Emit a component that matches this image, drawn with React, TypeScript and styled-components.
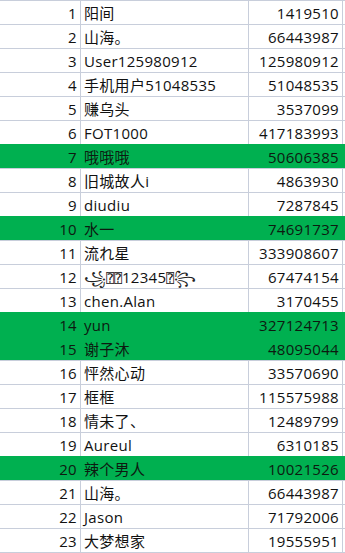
import React from "react";
import styled, { createGlobalStyle } from "styled-components";

const GlobalStyle = createGlobalStyle`
  html, body { margin: 0; padding: 0; background: #ffffff; }
  body { font-family: "Open Sans", "Noto Sans CJK SC", sans-serif; }
`;

const GRID = "#c8cedb";
const GREEN = "#00b050";

type RowData = { n: number; name: React.ReactNode; score: string; hl?: boolean };

const Sheet = styled.div`
  width: 345px;
  border-bottom: 1px solid ${GRID};
  display: flex;
  flex-direction: column;
`;

const Row = styled.div<{ $hl?: boolean }>`
  display: grid;
  grid-template-columns: 81px 168px 94px 1fr;
  height: 24px;
  box-sizing: border-box;
  border-top: 1px solid ${(p) => (p.$hl ? GREEN : GRID)};
  background: ${(p) => (p.$hl ? GREEN : "#ffffff")};
`;

const Cell = styled.div<{ $hl?: boolean; $align?: "left" | "right"; $last?: boolean }>`
  box-sizing: border-box;
  height: 23px;
  border-right: ${(p) => (p.$last ? "none" : `1px solid ${p.$hl ? GREEN : GRID}`)};
  font-size: 15px;
  letter-spacing: 0.3px;
  line-height: 23px;
  padding-top: 1px;
  color: ${(p) => (p.$hl ? "#0d1a10" : "#111111")};
  text-align: ${(p) => p.$align ?? "left"};
  padding-left: ${(p) => (p.$align === "right" ? "0" : "3px")};
  padding-right: ${(p) => (p.$align === "right" ? "3px" : "0")};
  white-space: nowrap;
  overflow: hidden;
`;

const Tofu = styled.span`
  font-family: "DejaVu Sans Mono", "DejaVu Sans", monospace;
  font-size: 13px;
  letter-spacing: 0;
`;

const Swirl = styled.span`
  font-family: "DejaVu Sans", serif;
  font-size: 14px;
  color: #222;
`;

const weird = (
  <>
    <Swirl>꧁</Swirl>
    <Tofu>⍰⍰</Tofu>12345<Tofu>⍰</Tofu>
    <Swirl>꧂</Swirl>
  </>
);

const rows: RowData[] = [
  { n: 1, name: "阳间", score: "1419510" },
  { n: 2, name: "山海。", score: "66443987" },
  { n: 3, name: "User125980912", score: "125980912" },
  { n: 4, name: "手机用户51048535", score: "51048535" },
  { n: 5, name: "赚乌头", score: "3537099" },
  { n: 6, name: "FOT1000", score: "417183993" },
  { n: 7, name: "哦哦哦", score: "50606385", hl: true },
  { n: 8, name: "旧城故人i", score: "4863930" },
  { n: 9, name: "diudiu", score: "7287845" },
  { n: 10, name: "水一", score: "74691737", hl: true },
  { n: 11, name: "流れ星", score: "333908607" },
  { n: 12, name: weird, score: "67474154" },
  { n: 13, name: "chen.Alan", score: "3170455" },
  { n: 14, name: "yun", score: "327124713", hl: true },
  { n: 15, name: "谢子沐", score: "48095044", hl: true },
  { n: 16, name: "怦然心动", score: "33570690" },
  { n: 17, name: "框框", score: "115575988" },
  { n: 18, name: "情未了、", score: "12489799" },
  { n: 19, name: "Aureul", score: "6310185" },
  { n: 20, name: "辣个男人", score: "10021526", hl: true },
  { n: 21, name: "山海。", score: "66443987" },
  { n: 22, name: "Jason", score: "71792006" },
  { n: 23, name: "大梦想家", score: "19555951" },
];

export default function App() {
  return (
    <>
      <GlobalStyle />
      <Sheet>
        {rows.map((r) => (
          <Row key={r.n} $hl={r.hl}>
            <Cell $hl={r.hl} $align="right">{r.n}</Cell>
            <Cell $hl={r.hl}>{r.name}</Cell>
            <Cell $hl={r.hl} $align="right">{r.score}</Cell>
            <Cell $hl={r.hl} $last />
          </Row>
        ))}
      </Sheet>
    </>
  );
}
